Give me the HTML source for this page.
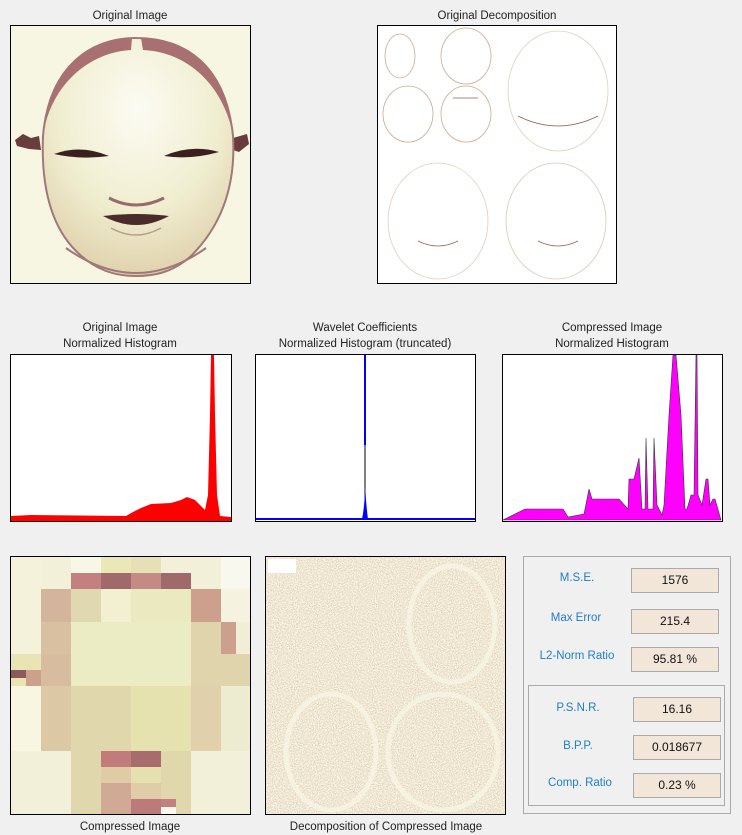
<!DOCTYPE html>
<html><head><meta charset="utf-8"><style>
body{margin:0;width:742px;height:835px;background:#f0f0f0;position:relative;overflow:hidden;font-family:"Liberation Sans",Arial,sans-serif;font-size:11.5px;color:#222}
.t{position:absolute;text-align:center;white-space:nowrap;line-height:16px}
.b{position:absolute;border:1px solid #000;box-sizing:border-box;background:#fff;overflow:hidden}
.c{position:absolute}
.lab{position:absolute;color:#1f7fc4;font-size:11.5px;text-align:center;width:100px}
.val{position:absolute;width:88px;height:25px;background:#f2e6d9;border:1px solid #aaa;box-sizing:border-box;text-align:center;line-height:23px;font-size:12px;color:#111}
</style></head><body>
<div class="t" style="left:30px;top:8px;width:200px">Original Image</div>
<div class="t" style="left:397px;top:8px;width:200px">Original Decomposition</div>

<div class="b" style="left:10px;top:25px;width:241px;height:259px;background:#f7f6e2">
<svg width="241" height="259" viewBox="0 0 241 259">
<defs><radialGradient id="fg" cx="0.5" cy="0.3" r="0.7"><stop offset="0" stop-color="#fcfbf3"/><stop offset="0.6" stop-color="#f0eed0"/><stop offset="1" stop-color="#e0d2ae"/></radialGradient></defs>
<path d="M4,114 L12,108 L20,112 L28,110 L30,124 L18,123 L6,120Z" fill="#6a3c3c"/>
<path d="M222,112 L236,108 L238,118 L228,126 L222,124Z" fill="#6a3c3c"/>
<path d="M125,12 C175,12 215,40 222,110 C225,160 210,200 180,230 C160,248 140,250 125,250 C105,250 85,245 65,225 C40,200 30,160 32,110 C38,40 80,12 125,12Z" fill="url(#fg)" stroke="#a07878" stroke-width="2"/>
<path d="M121,12 C80,12 42,38 34,100 C44,56 80,26 120,24Z M130,12 C175,12 214,40 220,100 C208,56 175,26 132,24Z" fill="#a87070"/>
<path d="M43,128 Q70,118 98,130 Q70,134 43,128Z" fill="#3a2020"/>
<path d="M153,130 Q180,118 208,126 Q180,134 153,130Z" fill="#3a2020"/>
<path d="M98,172 Q125,186 153,172" fill="none" stroke="#9a6a6a" stroke-width="3"/>
<path d="M92,190 Q125,186 158,190 Q125,208 92,190Z" fill="#4a2a2a"/>
<path d="M100,202 Q125,216 150,202" fill="none" stroke="#b89a90" stroke-width="1.5"/>
<path d="M55,222 Q125,272 195,222" fill="none" stroke="#a07878" stroke-width="2"/>
</svg></div>

<div class="b" style="left:377px;top:25px;width:240px;height:259px">
<svg width="240" height="259" viewBox="0 0 240 259" fill="none" stroke="#c8ac90" stroke-width="0.8">
<ellipse cx="88" cy="30" rx="25" ry="28"/><ellipse cx="30" cy="88" rx="25" ry="28"/><ellipse cx="88" cy="88" rx="25" ry="28"/>
<ellipse cx="22" cy="30" rx="15" ry="22"/><ellipse cx="180" cy="65" rx="50" ry="60" stroke="#ddd0bc"/>
<ellipse cx="60" cy="195" rx="50" ry="58" stroke="#ddd0bc"/><ellipse cx="178" cy="195" rx="50" ry="58" stroke="#d8c8b0"/>
<path d="M75,72 h25 M140,90 q40,20 80,0 M40,215 q20,10 40,0 M160,215 q20,10 40,0" stroke="#906050"/>
</svg></div>

<div class="t" style="left:20px;top:320px;width:200px">Original Image<br>Normalized Histogram</div>
<div class="t" style="left:265px;top:320px;width:200px">Wavelet Coefficients<br>Normalized Histogram (truncated)</div>
<div class="t" style="left:512px;top:320px;width:200px">Compressed Image<br>Normalized Histogram</div>

<div class="b" style="left:10px;top:354px;width:222px;height:168px">
<svg width="222" height="168" viewBox="0 0 222 168"><path d="M0,161 L20,160 L115,161 L122,157 L130,153 L140,149 L160,148 L170,145 L176,142 L184,145 L190,151 L194,155 L197,140 L199,60 L200,0 L203,0 L204,60 L206,140 L209,161 L220,162 L220,166 L0,166Z" fill="#f00"/></svg></div>

<div class="b" style="left:255px;top:354px;width:221px;height:168px">
<svg width="221" height="168" viewBox="0 0 221 168"><path d="M0,164 H221" stroke="#00f" stroke-width="2"/><path d="M109,0 V90" stroke="#00f" stroke-width="2"/><path d="M109,90 V150" stroke="#000" stroke-width="1"/><path d="M106,164 Q109,150 109,128 Q110,150 112,164Z" fill="#00f"/></svg></div>

<div class="b" style="left:502px;top:354px;width:221px;height:168px">
<svg width="221" height="168" viewBox="0 0 221 168"><path d="M0,165 22,154 60,154 65,162 81,159 86,134 89,144 116,144 125,154 126,124 131,124 136,103 139,154 142,154 143,83 145,154 150,154 151,83 154,150 159,160 161,150 166,60 170,0 173,0 178,60 182,154 184,154 188,140 191,140 193,0 194,0 195,140 199,150 203,124 205,124 207,150 210,144 212,144 218,165Z" fill="#f0f" stroke="#333" stroke-width="0.6"/></svg></div>

<div class="b" style="left:10px;top:556px;width:241px;height:259px;background:#f5f2dc">
<svg width="241" height="259" viewBox="10 556 241 259" shape-rendering="crispEdges">
<rect x="10" y="556" width="30" height="65" fill="#f5f2dc"/>
<rect x="40" y="556" width="30" height="32" fill="#f2f0d8"/>
<rect x="70" y="556" width="30" height="16" fill="#f7f7e8"/>
<rect x="100" y="556" width="30" height="16" fill="#ebe8b8"/>
<rect x="130" y="556" width="30" height="16" fill="#e5e0b5"/>
<rect x="160" y="556" width="60" height="32" fill="#f2f0d8"/>
<rect x="220" y="556" width="31" height="65" fill="#f8f8ee"/>
<rect x="70" y="572" width="30" height="16" fill="#c4807e"/>
<rect x="100" y="572" width="30" height="16" fill="#a06a6a"/>
<rect x="130" y="572" width="30" height="16" fill="#c48a84"/>
<rect x="160" y="572" width="30" height="16" fill="#a06a6a"/>
<rect x="40" y="588" width="30" height="33" fill="#d4b49c"/>
<rect x="70" y="588" width="30" height="33" fill="#e0d8b0"/>
<rect x="100" y="588" width="30" height="33" fill="#f2f0d0"/>
<rect x="130" y="588" width="60" height="33" fill="#ebe9c0"/>
<rect x="190" y="588" width="30" height="33" fill="#cca08c"/>
<rect x="220" y="588" width="31" height="33" fill="#f5f3e0"/>
<rect x="10" y="621" width="30" height="32" fill="#f5f2dc"/>
<rect x="40" y="621" width="30" height="32" fill="#d8c0a0"/>
<rect x="70" y="621" width="120" height="64" fill="#ebebc4"/>
<rect x="190" y="621" width="30" height="32" fill="#e0d4ac"/>
<rect x="220" y="621" width="15" height="32" fill="#cca08c"/>
<rect x="235" y="621" width="16" height="32" fill="#f0eed4"/>
<rect x="10" y="653" width="30" height="32" fill="#e8e4b4"/>
<rect x="10" y="669" width="15" height="8" fill="#8c5a5a"/>
<rect x="25" y="669" width="15" height="16" fill="#cca08c"/>
<rect x="40" y="653" width="30" height="32" fill="#d8bca0"/>
<rect x="190" y="653" width="61" height="32" fill="#e0d4ac"/>
<rect x="10" y="685" width="30" height="65" fill="#f8f5e0"/>
<rect x="40" y="685" width="30" height="65" fill="#dcc8a4"/>
<rect x="70" y="685" width="60" height="65" fill="#e0d8ac"/>
<rect x="130" y="685" width="60" height="65" fill="#e5e2b0"/>
<rect x="190" y="685" width="30" height="65" fill="#e0d0ac"/>
<rect x="220" y="685" width="31" height="65" fill="#eeecd0"/>
<rect x="10" y="750" width="60" height="65" fill="#f2f0d8"/>
<rect x="70" y="750" width="30" height="65" fill="#e0d8ac"/>
<rect x="100" y="750" width="30" height="16" fill="#c07c7a"/>
<rect x="100" y="766" width="30" height="16" fill="#e0cca4"/>
<rect x="100" y="782" width="30" height="33" fill="#d0aa94"/>
<rect x="130" y="750" width="30" height="16" fill="#a86c6c"/>
<rect x="130" y="766" width="30" height="16" fill="#e5e0b0"/>
<rect x="130" y="782" width="30" height="16" fill="#e0cca8"/>
<rect x="130" y="798" width="30" height="17" fill="#bc7a7a"/>
<rect x="160" y="750" width="30" height="65" fill="#e0d8ac"/>
<rect x="160" y="798" width="15" height="8" fill="#c48080"/>
<rect x="160" y="806" width="15" height="9" fill="#fbf9ee"/>
<rect x="190" y="750" width="61" height="65" fill="#f2f0d8"/>
</svg></div>

<div class="b" style="left:265px;top:556px;width:241px;height:259px;background:#efeacb">
<svg width="241" height="259">
<filter id="n"><feTurbulence type="fractalNoise" baseFrequency="0.95" numOctaves="1" seed="5"/><feColorMatrix values="0 0 0 0 0.65  0 0 0 0 0.45  0 0 0 0 0.4  0 0 0 -3 1.75"/></filter>
<filter id="w"><feTurbulence type="fractalNoise" baseFrequency="0.8" numOctaves="1" seed="9"/><feColorMatrix values="0 0 0 0 1  0 0 0 0 1  0 0 0 0 0.97  0 0 0 -3 1.9"/></filter>
<rect width="241" height="259" filter="url(#w)" opacity="0.9"/>
<rect width="241" height="259" filter="url(#n)" opacity="0.6"/>
<rect x="2" y="2" width="28" height="14" fill="#fff"/>
<g fill="none" stroke="#f8f6e6" stroke-width="5" opacity="0.75"><ellipse cx="65" cy="195" rx="45" ry="58"/><ellipse cx="177" cy="195" rx="55" ry="58"/><ellipse cx="186" cy="67" rx="43" ry="58"/></g>
</svg></div>

<div class="t" style="left:30px;top:819px;width:200px">Compressed Image</div>
<div class="t" style="left:286px;top:819px;width:200px">Decomposition of Compressed Image</div>

<div class="c" style="left:523px;top:556px;width:208px;height:258px;border:1px solid #aaa;box-sizing:border-box"></div>
<div class="c" style="left:528px;top:685px;width:197px;height:121px;border:1px solid #aaa;box-sizing:border-box"></div>
<div class="lab" style="left:527px;top:572px">M.S.E.</div>
<div class="lab" style="left:526px;top:612px">Max Error</div>
<div class="lab" style="left:527px;top:650px">L2-Norm Ratio</div>
<div class="lab" style="left:528px;top:702px">P.S.N.R.</div>
<div class="lab" style="left:528px;top:740px">B.P.P.</div>
<div class="lab" style="left:530px;top:777px">Comp. Ratio</div>
<div class="val" style="left:631px;top:568px">1576</div>
<div class="val" style="left:631px;top:609px">215.4</div>
<div class="val" style="left:631px;top:647px">95.81 %</div>
<div class="val" style="left:633px;top:697px">16.16</div>
<div class="val" style="left:633px;top:735px">0.018677</div>
<div class="val" style="left:633px;top:773px">0.23 %</div>
</body></html>
